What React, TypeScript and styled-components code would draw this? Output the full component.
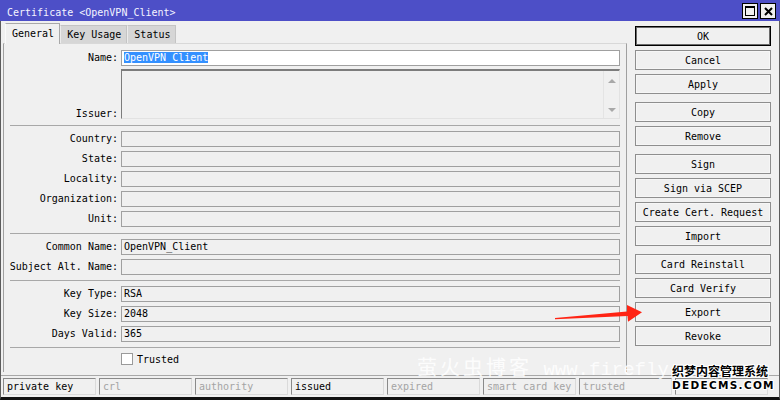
import styled, { createGlobalStyle } from "styled-components"

const GlobalStyle = createGlobalStyle`
html, body {
    margin: 0;
    padding: 0;
    background: #f0f0f0;
}
body {
    font-family: "DejaVu Sans Mono", "Liberation Mono", monospace;
    font-size: 10px;
    color: #000;
}
`

const Window = styled.div`
position: relative;
width: 780px;
height: 400px;
display: flex;
flex-direction: column;
background: #f0f0f0;
overflow: hidden;
`

const TitleBar = styled.div`
height: 21px;
flex: none;
display: flex;
justify-content: space-between;
background: #4d4fc7;
color: #f4f4ff;
padding-left: 7px;
padding-right: 4px;
`

const Title = styled.div`
line-height: 21px;
padding-top: 2px;
`

const WinControls = styled.div`
display: flex;
gap: 2px;
margin-top: 3px;
`

const WinButton = styled.div`
width: 16px;
height: 16px;
box-sizing: border-box;
border: 1px solid #000;
background: #f0f0f0;
display: flex;
align-items: center;
justify-content: center;
`

const Frame = styled.div`
flex: 1;
display: flex;
flex-direction: column;
border-left: 1px solid #5c5c5c;
border-right: 1px solid #5c5c5c;
border-bottom: 3px solid #111;
`

const Body = styled.div`
flex: 1;
display: flex;
`

const LeftPane = styled.div`
width: 626px;
box-sizing: border-box;
padding: 2px 0 3px 2px;
display: flex;
flex-direction: column;
`

const TabStrip = styled.div`
height: 20px;
display: flex;
align-items: flex-end;
margin-left: 2px;
`

const Tab = styled.div<{ $active?: boolean }>`
box-sizing: border-box;
height: ${p => (p.$active ? "21px" : "18px")};
margin-bottom: ${p => (p.$active ? "-1px" : "0")};
padding: 0 5px 0 6px;
line-height: ${p => (p.$active ? "19px" : "17px")};
background: ${p => (p.$active ? "#f0f0f0" : "#d6d6d6")};
border: 1px solid ${p => (p.$active ? "#a8a8a8" : "#c4c4c4")};
border-bottom: none;
border-left-color: ${p => (p.$active ? "#fafafa" : "#ececec")};
position: relative;
z-index: ${p => (p.$active ? 1 : 0)};
`

const Panel = styled.div`
flex: 1;
box-sizing: border-box;
border-top: 1px solid #d8d8d8;
border-left: 1px solid #a0a0a0;
border-right: 1px solid #a0a0a0;
padding: 6px 6px 0 0;
display: flex;
flex-direction: column;
`

const Section = styled.div`
display: flex;
flex-direction: column;
gap: 4px;
`

const Row = styled.div<{ $tall?: boolean }>`
display: grid;
grid-template-columns: 114px 1fr;
column-gap: 3px;
height: ${p => (p.$tall ? "50px" : "16px")};
margin-top: ${p => (p.$tall ? "-1px" : "0")};
`

const Label = styled.div<{ $bottom?: boolean }>`
text-align: right;
line-height: 16px;
white-space: nowrap;
align-self: ${p => (p.$bottom ? "end" : "center")};
margin-bottom: ${p => (p.$bottom ? "-3px" : "0")};
`

const Field = styled.div<{ $white?: boolean }>`
box-sizing: border-box;
height: 16px;
border: 1px solid #a0a0a0;
background: ${p => (p.$white ? "#fff" : "#f0f0f0")};
padding: 0 2px;
line-height: 14px;
white-space: nowrap;
overflow: hidden;
`

const Selected = styled.span`
background: #3390ff;
color: #fff;
`

const TextBox = styled.div`
box-sizing: border-box;
height: 50px;
border-top: 2px solid #7c7c7c;
border-left: 1px solid #7c7c7c;
border-right: 1px solid #e2e2e2;
border-bottom: 1px solid #e2e2e2;
background: #f0f0f0;
display: flex;
justify-content: flex-end;
`

const ScrollTrack = styled.div`
width: 15px;
border-left: 1px solid #e4e4e4;
display: flex;
flex-direction: column;
justify-content: space-between;
align-items: center;
padding: 8px 0 6px;
`

const Arrow = styled.div<{ $down?: boolean }>`
width: 0;
height: 0;
border-left: 4px solid transparent;
border-right: 4px solid transparent;
${p => (p.$down ? "border-top: 4px solid #a8a8a8;" : "border-bottom: 4px solid #a8a8a8;")}
`

const Separator = styled.div<{ $tight?: boolean }>`
height: 1px;
background: #a8a8a8;
margin: ${p => (p.$tight ? "5px" : "6px")} 0 5px 6px;
`

const CheckRow = styled.div`
display: flex;
align-items: center;
gap: 4px;
margin-left: 117px;
height: 12px;
`

const CheckBox = styled.div`
width: 12px;
height: 12px;
box-sizing: border-box;
border: 1px solid #9a9a9a;
background: #fff;
`

const ButtonColumn = styled.div`
width: 136px;
padding: 5px 0 0 8px;
display: flex;
flex-direction: column;
gap: 8px;
`

const ButtonGroup = styled.div`
display: flex;
flex-direction: column;
gap: 4px;
`

const Button = styled.button<{ $primary?: boolean }>`
box-sizing: border-box;
width: 136px;
height: 20px;
padding: 0;
font: inherit;
color: #000;
background: #f0f0f0;
border: 1px solid ${p => (p.$primary ? "#000" : "#8e8e8e")};
box-shadow: ${p => (p.$primary ? "inset 0 0 0 1px #6a6a6a" : "inset 0 0 0 1px #f6f6f6")};
`

const StatusBar = styled.div`
height: 22px;
box-sizing: border-box;
border-top: 1px solid #a8a8a8;
padding: 2px 0 2px 2px;
display: flex;
gap: 3px;
`

const StatusCell = styled.div<{ $on?: boolean }>`
width: 93px;
height: 17px;
box-sizing: border-box;
border-top: 1px solid #8a8a8a;
border-left: 1px solid #8a8a8a;
border-right: 1px solid #dadada;
border-bottom: 1px solid #dadada;
padding-left: 3px;
line-height: 15px;
white-space: nowrap;
overflow: hidden;
color: ${p => (p.$on ? "#000" : "#a4a4a4")};
`

const Watermark = styled.div`
position: absolute;
left: 417px;
top: 356px;
line-height: 22px;
white-space: nowrap;
color: rgba(255, 255, 255, 0.85);
pointer-events: none;
`

const WatermarkCjk = styled.span`
font-family: "Noto Sans CJK SC", sans-serif;
font-size: 20px;
letter-spacing: 3px;
`

const WatermarkUrl = styled.span`
font-family: "Liberation Mono", monospace;
font-size: 19px;
`

const Logo = styled.div`
position: absolute;
left: 672px;
top: 364px;
width: 98px;
color: #000;
font-weight: bold;
text-shadow: 1px 0 0 #fff, -1px 0 0 #fff, 0 1px 0 #fff, 0 -1px 0 #fff, 1px 1px 0 #fff, -1px -1px 0 #fff, 1px -1px 0 #fff, -1px 1px 0 #fff;
pointer-events: none;
`

const LogoCjk = styled.div`
font-family: "Noto Sans CJK SC", sans-serif;
font-size: 12px;
line-height: 14px;
`

const LogoLatin = styled.div`
font-family: "DejaVu Sans", sans-serif;
font-size: 10.5px;
letter-spacing: 1.3px;
line-height: 12px;
margin-top: 1px;
`

const ArrowMark = styled.svg`
position: absolute;
left: 550px;
top: 300px;
pointer-events: none;
`

const subjectRows = ["Country", "State", "Locality", "Organization", "Unit"]

const keyRows = [
    { label: "Key Type", value: "RSA" },
    { label: "Key Size", value: "2048" },
    { label: "Days Valid", value: "365" },
]

const buttonGroups = [
    ["OK", "Cancel", "Apply"],
    ["Copy", "Remove"],
    ["Sign", "Sign via SCEP", "Create Cert. Request", "Import"],
    ["Card Reinstall", "Card Verify", "Export", "Revoke"],
]

const statusCells = [
    { text: "private key", on: true },
    { text: "crl", on: false },
    { text: "authority", on: false },
    { text: "issued", on: true },
    { text: "expired", on: false },
    { text: "smart card key", on: false },
    { text: "trusted", on: false },
    { text: "", on: false },
]

export default function App() {
    return (
        <>
            <GlobalStyle />
            <Window>
                <TitleBar>
                    <Title>Certificate &lt;OpenVPN_Client&gt;</Title>
                    <WinControls>
                        <WinButton>
                            <svg width="10" height="10" viewBox="0 0 10 10">
                                <rect x="0.5" y="0.5" width="9" height="9" fill="none" stroke="#000" />
                                <rect x="0" y="0" width="10" height="2" fill="#000" />
                            </svg>
                        </WinButton>
                        <WinButton>
                            <svg width="9" height="9" viewBox="0 0 9 9">
                                <path d="M1 1 L8 8 M8 1 L1 8" stroke="#000" strokeWidth="2" />
                            </svg>
                        </WinButton>
                    </WinControls>
                </TitleBar>
                <Frame>
                    <Body>
                        <LeftPane>
                            <TabStrip>
                                <Tab $active>General</Tab>
                                <Tab>Key Usage</Tab>
                                <Tab>Status</Tab>
                            </TabStrip>
                            <Panel>
                                <Section>
                                    <Row>
                                        <Label>Name:</Label>
                                        <Field $white><Selected>OpenVPN_Client</Selected></Field>
                                    </Row>
                                    <Row $tall>
                                        <Label $bottom>Issuer:</Label>
                                        <TextBox>
                                            <ScrollTrack>
                                                <Arrow />
                                                <Arrow $down />
                                            </ScrollTrack>
                                        </TextBox>
                                    </Row>
                                </Section>
                                <Separator />
                                <Section>
                                    {subjectRows.map(r => (
                                        <Row key={r}>
                                            <Label>{r}:</Label>
                                            <Field />
                                        </Row>
                                    ))}
                                </Section>
                                <Separator />
                                <Section>
                                    <Row>
                                        <Label>Common Name:</Label>
                                        <Field>OpenVPN_Client</Field>
                                    </Row>
                                    <Row>
                                        <Label>Subject Alt. Name:</Label>
                                        <Field />
                                    </Row>
                                </Section>
                                <Separator $tight />
                                <Section>
                                    {keyRows.map(r => (
                                        <Row key={r.label}>
                                            <Label>{r.label}:</Label>
                                            <Field>{r.value}</Field>
                                        </Row>
                                    ))}
                                </Section>
                                <Separator $tight />
                                <CheckRow>
                                    <CheckBox />
                                    <span>Trusted</span>
                                </CheckRow>
                            </Panel>
                        </LeftPane>
                        <ButtonColumn>
                            {buttonGroups.map((g, i) => (
                                <ButtonGroup key={i}>
                                    {g.map(b => (
                                        <Button key={b} $primary={b === "OK"}>{b}</Button>
                                    ))}
                                </ButtonGroup>
                            ))}
                        </ButtonColumn>
                    </Body>
                    <StatusBar>
                        {statusCells.map((c, i) => (
                            <StatusCell key={i} $on={c.on}>{c.text}</StatusCell>
                        ))}
                    </StatusBar>
                </Frame>
                <Watermark>
                    <WatermarkCjk>萤火虫博客</WatermarkCjk>
                    <WatermarkUrl> www.firefly</WatermarkUrl>
                </Watermark>
                <ArrowMark width="95" height="25" viewBox="550 300 95 25">
                    <polygon
                        points="555,318 627,311.5 627,305 642,312.3 628,321.7 627.5,316 555,319.2"
                        fill="#ff2414"
                    />
                </ArrowMark>
                <Logo>
                    <LogoCjk>织梦内容管理系统</LogoCjk>
                    <LogoLatin>DEDECMS.COM</LogoLatin>
                </Logo>
            </Window>
        </>
    )
}
